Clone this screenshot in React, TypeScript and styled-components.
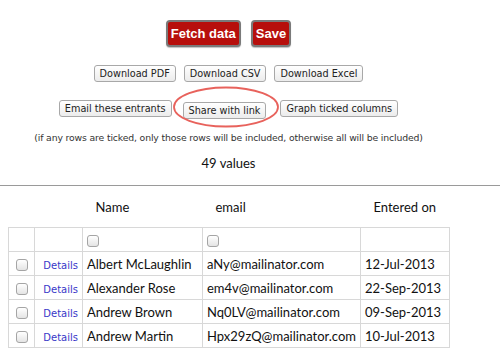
import React from 'react';
import styled, { createGlobalStyle } from 'styled-components';

interface Entrant {
  name: string;
  email: string;
  enteredOn: string;
}

const entrants: Entrant[] = [
  { name: 'Albert McLaughlin', email: 'aNy@mailinator.com', enteredOn: '12-Jul-2013' },
  { name: 'Alexander Rose', email: 'em4v@mailinator.com', enteredOn: '22-Sep-2013' },
  { name: 'Andrew Brown', email: 'Nq0LV@mailinator.com', enteredOn: '09-Sep-2013' },
  { name: 'Andrew Martin', email: 'Hpx29zQ@mailinator.com', enteredOn: '10-Jul-2013' },
];

function App() {
  return (
    <>
      <GlobalStyle />
      <Page>
        <Controls>
          <ButtonRow $top={20} $gap={10}>
            <PrimaryButton>Fetch data</PrimaryButton>
            <PrimaryButton>Save</PrimaryButton>
          </ButtonRow>
          <ButtonRow $top={18} $gap={8}>
            <PlainButton>Download PDF</PlainButton>
            <PlainButton>Download CSV</PlainButton>
            <PlainButton>Download Excel</PlainButton>
          </ButtonRow>
          <ButtonRow $top={16} $gap={8}>
            <PlainButton>Email these entrants</PlainButton>
            <Highlighted>
              <PlainButton>Share with link</PlainButton>
              <Circle width="108" height="42" viewBox="0 0 108 42">
                <ellipse cx="54" cy="21" rx="52" ry="19.5" fill="none" stroke="#e8625c" strokeWidth="1.8" />
              </Circle>
            </Highlighted>
            <PlainButton>Graph ticked columns</PlainButton>
          </ButtonRow>
          <Note>(if any rows are ticked, only those rows will be included, otherwise all will be included)</Note>
          <Count>49 values</Count>
        </Controls>
        <Divider />
        <Table>
          <thead>
            <tr>
              <HeadCell />
              <HeadCell />
              <HeadCell>Name</HeadCell>
              <HeadCell>email</HeadCell>
              <HeadCell>Entered on</HeadCell>
            </tr>
          </thead>
          <tbody>
            <tr>
              <Cell $width={26} />
              <Cell $width={48} />
              <Cell $width={120}><Check /></Cell>
              <Cell $width={158}><Check /></Cell>
              <Cell $width={89} />
            </tr>
            {entrants.map((e) => (
              <tr key={e.email}>
                <Cell $center><Check /></Cell>
                <Cell $right><DetailsLink href="#">Details</DetailsLink></Cell>
                <Cell>{e.name}</Cell>
                <Cell>{e.email}</Cell>
                <Cell>{e.enteredOn}</Cell>
              </tr>
            ))}
          </tbody>
        </Table>
      </Page>
    </>
  );
}

export default App;

const GlobalStyle = createGlobalStyle`
  html, body {
    margin: 0;
    padding: 0;
    background: #ffffff;
  }
  body {
    font-family: "Lato", "Open Sans", sans-serif;
    color: #111;
  }
`

const Page = styled.div`
  width: 500px;
  height: 353px;
  overflow: hidden;
`

const Controls = styled.div`
  margin-left: 8px;
  width: 441px;
  display: flex;
  flex-direction: column;
  align-items: center;
`

const ButtonRow = styled.div<{ $top: number; $gap: number }>`
  margin-top: ${({ $top }) => $top}px;
  display: flex;
  align-items: center;
  gap: ${({ $gap }) => $gap}px;
`

const PrimaryButton = styled.button`
  height: 27px;
  padding: 0 3px;
  font-family: "Liberation Sans", Arial, sans-serif;
  font-size: 13px;
  font-weight: 700;
  color: #fff;
  background: #b70f0c;
  border: 2px solid #7a7a7a;
  border-radius: 4px;
  box-shadow: 0 1px 1px rgba(0, 0, 0, 0.25);
`

const PlainButton = styled.button`
  height: 17px;
  padding: 0 5px;
  font-family: "DejaVu Sans", sans-serif;
  font-size: 9.7px;
  color: #222;
  background: linear-gradient(#ffffff, #ececec);
  border: 1px solid #a8a8a8;
  border-radius: 3px;
  white-space: nowrap;
`

const Highlighted = styled.div`
  position: relative;
  margin: 0 6px 0 3px;
`

const Circle = styled.svg`
  position: absolute;
  left: -11px;
  top: -12px;
  pointer-events: none;
`

const Note = styled.p`
  margin: 13px 0 0;
  font-family: "DejaVu Sans", sans-serif;
  font-size: 9.3px;
  letter-spacing: -0.15px;
  color: #333;
  white-space: nowrap;
`

const Count = styled.p`
  margin: 12px 0 0;
  font-size: 13px;
  color: #111;
`

const Divider = styled.hr`
  margin: 14px 0 0;
  border: none;
  border-top: 1px solid #9a9a9a;
`

const Table = styled.table`
  margin-left: 8px;
  border-collapse: collapse;
  font-size: 13px;
`

const HeadCell = styled.th`
  height: 41px;
  padding: 0 0 0 13px;
  text-align: left;
  font-weight: 400;
  font-size: 13px;
  color: #111;
`

const Cell = styled.td<{ $width?: number; $center?: boolean; $right?: boolean }>`
  ${({ $width }) => ($width ? `width: ${$width}px;` : '')}
  height: 24px;
  padding: 0 4px;
  border: 1px solid #d8d8d8;
  text-align: ${({ $center, $right }) => ($center ? 'center' : $right ? 'right' : 'left')};
  white-space: nowrap;
  box-sizing: border-box;
`

const Check = styled.span`
  display: inline-block;
  width: 10px;
  height: 10px;
  vertical-align: middle;
  border: 1px solid #a5a5a5;
  border-radius: 3px;
  background: linear-gradient(#ffffff, #e4e4e4);
`

const DetailsLink = styled.a`
  font-family: "DejaVu Sans", sans-serif;
  font-size: 10px;
  color: #3838c8;
  text-decoration: none;
`
